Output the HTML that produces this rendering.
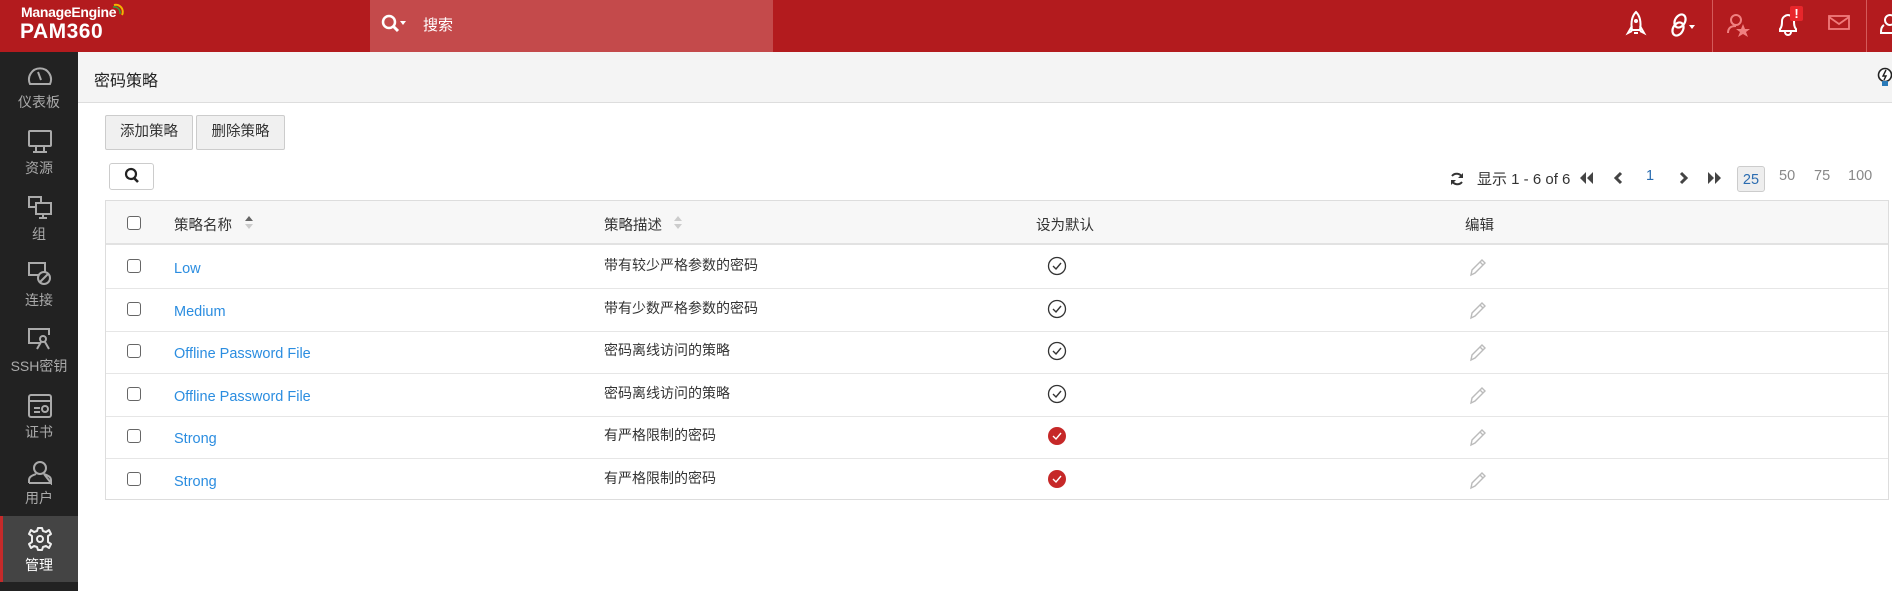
<!DOCTYPE html>
<html><head><meta charset="utf-8"><style>
*{margin:0;padding:0;box-sizing:border-box}
body{width:1892px;height:591px;overflow:hidden;background:#fff;font-family:"Liberation Sans","Noto Sans CJK SC",sans-serif;position:relative;color:#333}
.a{position:absolute}
#hdr{left:0;top:0;width:1892px;height:52px;background:#b31b1e}
#srch{left:370px;top:0;width:403px;height:52px;background:#c44a4b}
#side{left:0;top:52px;width:78px;height:539px;background:#222}
.si{position:absolute;left:0;width:78px;text-align:center;color:#aaa;font-size:14px}
#title{left:78px;top:52px;width:1814px;height:51px;background:#f4f4f4;border-bottom:1px solid #ddd}
.btn{position:absolute;top:115px;height:35px;background:#f0f0f0;border:1px solid #ccc;border-radius:2px;font-size:14.5px;color:#333;text-align:center;line-height:33px}
#tbl{left:105px;top:200px;width:1784px;height:300px;border:1px solid #ddd}
.hr{position:absolute;left:0;width:1782px;top:0;height:44px;background:#f7f7f7;border-bottom:2px solid #e2e2e2}
.row{position:absolute;left:0;width:1782px;height:43px;border-bottom:1px solid #e6e6e6}
.cb{position:absolute;left:21px;width:14px;height:14px;border:1.5px solid #666;border-radius:3px;background:#fff}
.nm{position:absolute;left:68px;color:#2b8de0;font-size:14.5px}
.ds{position:absolute;left:498px;font-size:14px;color:#333}
.pg{position:absolute;top:168px;font-size:14.5px;color:#888}
</style></head><body>
<div id="hdr" class="a"></div>
<div class="a" style="left:21px;top:4px;color:#fff;font-size:14px;font-weight:bold;letter-spacing:-0.3px">ManageEngine</div>
<svg class="a" style="left:112px;top:2px" width="14" height="16"><path d="M2 3 A7 7 0 0 1 10 13" stroke="#f5b400" stroke-width="2" fill="none"/><path d="M1 5 A6 6 0 0 1 8 12" stroke="#3a9e3a" stroke-width="1.5" fill="none"/></svg>
<div class="a" style="left:20px;top:20px;color:#fff;font-size:21px;font-weight:bold;letter-spacing:0.5px">PAM360</div>
<div id="srch" class="a"></div>
<svg class="a" style="left:380px;top:13px" width="28" height="24"><circle cx="9" cy="9" r="6" stroke="#fff" stroke-width="2.5" fill="none"/><path d="M13 13 L18 18" stroke="#fff" stroke-width="3"/><path d="M20 8 L26 8 L23 12Z" fill="#fff"/></svg>
<div class="a" style="left:423px;top:14px;color:#fff;font-size:15px">搜索</div>
<svg class="a" style="left:1625px;top:10px" width="22" height="28"><path d="M11 2 C16 7 16 14 15 20 L7 20 C6 14 6 7 11 2Z" stroke="#fff" stroke-width="2" fill="none"/><circle cx="11" cy="11" r="2" fill="#fff"/><path d="M7 16 L3 23 L7 21 M15 16 L19 23 L15 21 M9 23 L13 23" stroke="#fff" stroke-width="2" fill="none"/></svg>
<svg class="a" style="left:1670px;top:12px" width="28" height="26"><ellipse cx="10" cy="9" rx="5" ry="7" transform="rotate(30 10 9)" stroke="#fff" stroke-width="2.2" fill="none"/><ellipse cx="8" cy="17" rx="5" ry="7" transform="rotate(30 8 17)" stroke="#fff" stroke-width="2.2" fill="none"/><path d="M19 13 L25 13 L22 17Z" fill="#fff"/></svg>
<div class="a" style="left:1712px;top:0;width:1px;height:52px;background:#d45a5a"></div>
<svg class="a" style="left:1726px;top:12px" width="26" height="26"><circle cx="10" cy="8" r="5" stroke="#f08080" stroke-width="2" fill="none"/><path d="M2 21 C2 15 6 14 10 14" stroke="#f08080" stroke-width="2" fill="none"/><path d="M17 12 L19 17 L24 17 L20 20 L22 25 L17 22 L12 25 L14 20 L10 17 L15 17Z" fill="#f08080"/></svg>
<svg class="a" style="left:1776px;top:12px" width="24" height="24"><path d="M4 19 L4 17 C6 15 6 12 6 9 C6 5 10 3 12 3 C14 3 18 5 18 9 C18 12 18 15 20 17 L20 19Z" stroke="#fff" stroke-width="2" fill="none"/><path d="M9 20 A3 3 0 0 0 15 20" stroke="#fff" stroke-width="2" fill="none"/></svg>
<div class="a" style="left:1790px;top:6px;width:13px;height:15px;background:#e8262b;border-radius:2px;color:#fff;font-weight:bold;font-size:13px;text-align:center;line-height:15px">!</div>
<svg class="a" style="left:1828px;top:15px" width="22" height="16"><rect x="1" y="1" width="20" height="13" stroke="#f07b7b" stroke-width="1.8" fill="none"/><path d="M1 2 L11 9 L21 2" stroke="#f07b7b" stroke-width="1.8" fill="none"/></svg>
<div class="a" style="left:1866px;top:0;width:1px;height:52px;background:#d45a5a"></div>
<svg class="a" style="left:1880px;top:13px" width="14" height="22"><circle cx="10" cy="7" r="5" stroke="#fff" stroke-width="2" fill="none"/><path d="M4 12 C1 14 1 17 1 20 L14 20" stroke="#fff" stroke-width="2" fill="none"/></svg>
<div id="side" class="a"></div>
<div class="a" style="left:0;top:516px;width:78px;height:66px;background:#444;border-left:3px solid #c52a2a"></div>
<svg class="a" style="left:27px;top:64px" width="26" height="24"><path d="M3 20 A11 11 0 1 1 23 20 Z" stroke="#aaa" stroke-width="2" fill="none"/><path d="M11 8 L14 16" stroke="#aaa" stroke-width="2"/></svg>
<div class="si" style="top:92px">仪表板</div>
<svg class="a" style="left:27px;top:129px" width="26" height="26"><rect x="2" y="2" width="22" height="15" rx="1" stroke="#aaa" stroke-width="2" fill="none"/><path d="M9 18 L9 22 M17 18 L17 22 M6 23 L20 23" stroke="#aaa" stroke-width="2"/></svg>
<div class="si" style="top:158px">资源</div>
<svg class="a" style="left:27px;top:195px" width="26" height="26"><rect x="2" y="2" width="12" height="10" stroke="#aaa" stroke-width="2" fill="none"/><rect x="9" y="8" width="15" height="11" stroke="#aaa" stroke-width="2" fill="#222"/><path d="M16 19 L16 23 M12 23 L20 23" stroke="#aaa" stroke-width="2"/></svg>
<div class="si" style="top:224px">组</div>
<svg class="a" style="left:27px;top:261px" width="26" height="26"><rect x="2" y="2" width="16" height="12" stroke="#aaa" stroke-width="2" fill="none"/><circle cx="17" cy="17" r="6" stroke="#aaa" stroke-width="2" fill="#222"/><path d="M13 21 L21 13" stroke="#aaa" stroke-width="2"/></svg>
<div class="si" style="top:290px">连接</div>
<svg class="a" style="left:27px;top:327px" width="26" height="26"><path d="M14 16 L2 16 L2 2 L22 2 L22 8" stroke="#aaa" stroke-width="2" fill="none"/><circle cx="16" cy="12" r="3" stroke="#aaa" stroke-width="2" fill="none"/><path d="M14 15 L10 22 M18 15 L22 22" stroke="#aaa" stroke-width="2"/></svg>
<div class="si" style="top:356px">SSH密钥</div>
<svg class="a" style="left:27px;top:393px" width="26" height="26"><rect x="2" y="2" width="22" height="22" rx="2" stroke="#aaa" stroke-width="2" fill="none"/><path d="M2 8 L24 8 M7 15 L13 15 M7 19 L13 19" stroke="#aaa" stroke-width="2"/><circle cx="18" cy="16" r="3" stroke="#aaa" stroke-width="2" fill="none"/></svg>
<div class="si" style="top:422px">证书</div>
<svg class="a" style="left:27px;top:459px" width="26" height="26"><circle cx="13" cy="9" r="6" stroke="#aaa" stroke-width="2" fill="none"/><path d="M2 24 L2 21 C2 17 7 16 9 15 M17 15 C19 16 24 17 24 21 L24 24 Z M2 24 L24 24" stroke="#aaa" stroke-width="2" fill="none"/></svg>
<div class="si" style="top:488px">用户</div>
<svg class="a" style="left:27px;top:526px" width="26" height="26"><circle cx="13" cy="13" r="3" stroke="#eee" stroke-width="2" fill="none"/><path d="M11 2 L15 2 L16 5 L19 6 L22 4 L24 8 L21 10 L21 13 L21 16 L24 18 L22 22 L19 20 L16 21 L15 24 L11 24 L10 21 L7 20 L4 22 L2 18 L5 16 L5 10 L2 8 L4 4 L7 6 L10 5Z" stroke="#eee" stroke-width="2" fill="none" stroke-linejoin="round"/></svg>
<div class="si" style="top:555px;color:#fff">管理</div>
<div id="title" class="a"></div>
<div class="a" style="left:94px;top:67px;font-size:16px;color:#222">密码策略</div>
<svg class="a" style="left:1876px;top:67px" width="16" height="22"><circle cx="9" cy="8" r="6.5" stroke="#222" stroke-width="1.6" fill="#fff"/><path d="M10 3 L7 9 L10 9 L8 13" stroke="#222" stroke-width="1.4" fill="none"/><rect x="6" y="14" width="6" height="5" fill="#2a7ab8"/></svg>
<div class="btn" style="left:105px;width:88px">添加策略</div>
<div class="btn" style="left:196px;width:89px">删除策略</div>
<div class="a" style="left:109px;top:163px;width:45px;height:27px;border:1px solid #ccc;border-radius:3px;background:#fff"></div>
<svg class="a" style="left:124px;top:167px" width="16" height="18"><circle cx="7" cy="7" r="5" stroke="#222" stroke-width="2.2" fill="none"/><path d="M10 11 L14 15" stroke="#222" stroke-width="2.6"/></svg>
<svg class="a" style="left:1449px;top:171px" width="16" height="16"><path d="M13 6 A6 6 0 0 0 3 5 M3 10 A6 6 0 0 0 13 11" stroke="#333" stroke-width="2" fill="none"/><path d="M14 2 L14 7 L9 7Z M2 14 L2 9 L7 9Z" fill="#333"/></svg>
<div class="a" style="left:1477px;top:168px;font-size:15px;color:#333">显示 1 - 6 of 6</div>
<svg class="a" style="left:1579px;top:171px" width="16" height="14"><path d="M7 1 L1 7 L7 13Z M14 1 L8 7 L14 13Z" fill="#444"/></svg>
<svg class="a" style="left:1613px;top:171px" width="10" height="14"><path d="M8 2 L3 7 L8 12" stroke="#444" stroke-width="3" fill="none"/></svg>
<div class="pg" style="left:1646px;color:#2b6cb0">1</div>
<svg class="a" style="left:1679px;top:171px" width="10" height="14"><path d="M2 2 L7 7 L2 12" stroke="#444" stroke-width="3" fill="none"/></svg>
<svg class="a" style="left:1706px;top:171px" width="16" height="14"><path d="M2 1 L8 7 L2 13Z M9 1 L15 7 L9 13Z" fill="#444"/></svg>
<div class="a" style="left:1737px;top:166px;width:28px;height:26px;border:1px solid #ccc;border-radius:3px;background:#eee;color:#2b6cb0;font-size:14.5px;text-align:center;line-height:26px">25</div>
<div class="pg" style="left:1779px">50</div>
<div class="pg" style="left:1814px">75</div>
<div class="pg" style="left:1848px">100</div>
<div id="tbl" class="a">
 <div class="hr">
  <div class="cb" style="top:15px"></div>
  <div class="a" style="left:68px;top:13px;font-size:14.5px">策略名称</div>
  <svg class="a" style="left:138px;top:14px" width="10" height="16"><path d="M1 6 L5 1 L9 6Z" fill="#666"/><path d="M1 9 L5 14 L9 9Z" fill="#ccc"/></svg>
  <div class="a" style="left:498px;top:13px;font-size:14.5px">策略描述</div>
  <svg class="a" style="left:567px;top:14px" width="10" height="16"><path d="M1 6 L5 1 L9 6Z" fill="#ccc"/><path d="M1 9 L5 14 L9 9Z" fill="#ccc"/></svg>
  <div class="a" style="left:930px;top:13px;font-size:14.5px">设为默认</div>
  <div class="a" style="left:1359px;top:13px;font-size:14.5px">编辑</div>
 </div>
</div>
<script>
(function(){
var d=[["Low","带有较少严格参数的密码",0],["Medium","带有少数严格参数的密码",0],["Offline Password File","密码离线访问的策略",0],["Offline Password File","密码离线访问的策略",0],["Strong","有严格限制的密码",1],["Strong","有严格限制的密码",1]];
var t=document.getElementById('tbl'),h='';
for(var i=0;i<6;i++){var ty=45+i*42.5;
h+='<div class="row" style="top:'+ty+'px;'+(i==5?'border-bottom:none':'')+'"><div class="cb" style="top:13px"></div><div class="nm" style="top:15px">'+d[i][0]+'</div><div class="ds" style="top:9px">'+d[i][1]+'</div>'+
(d[i][2]?'<svg class="a" style="left:941px;top:10px" width="20" height="20"><circle cx="10" cy="10" r="9" fill="#c62828"/><path d="M6 10 L9 13 L14 7" stroke="#fff" stroke-width="1.4" fill="none"/></svg>':'<svg class="a" style="left:941px;top:10px" width="20" height="20"><circle cx="10" cy="10" r="8.5" stroke="#333" stroke-width="1.3" fill="none"/><path d="M6 10 L9 13 L14 7" stroke="#333" stroke-width="1.4" fill="none"/></svg>')+
'<svg class="a" style="left:1362px;top:11px" width="20" height="20"><path d="M3 18 L4 13 L14 3 L17 6 L7 16Z M12 5 L15 8" stroke="#bbb" stroke-width="1.4" fill="none"/></svg></div>';}
t.insertAdjacentHTML('beforeend',h);
})();
</script>
</body></html>
